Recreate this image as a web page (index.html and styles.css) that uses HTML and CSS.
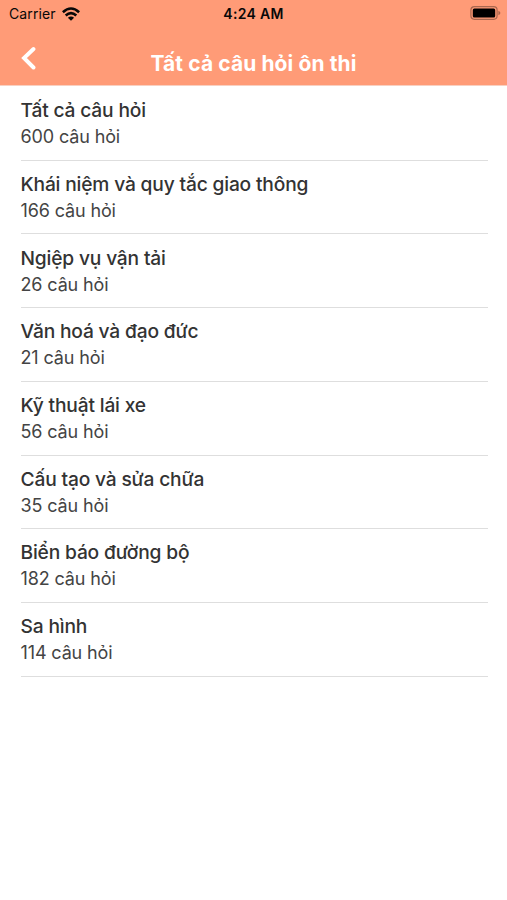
FILE: index.html
```html
<!DOCTYPE html>
<html lang="vi">
<head>
<meta charset="utf-8">
<title>Tất cả câu hỏi ôn thi</title>
<link rel="stylesheet" href="styles.css">
</head>
<body>
<header class="header">
  <div class="status">
    <div class="carrier"><span class="carrier-name">Carrier</span>
      <svg class="wifi" viewBox="0 0 18 14" width="18" height="14"><g fill="none" stroke="#080808" stroke-width="2.6"><path d="M.9 5.200Q9 -2.200 17.100 5.200"/><path d="M3.700 8.500Q9 3.800 14.300 8.500"/></g><path d="M9 13.800L5.900 10.700Q9 8.200 12.100 10.700Z" fill="#080808"/></svg>
    </div>
    <div class="time"><span class="time-text">4:24 AM</span></div>
    <svg class="battery" viewBox="0 0 31 14" width="31" height="14"><rect x=".9" y=".7" width="26.200" height="12.600" rx="3.500" fill="none" stroke="#a9674f" stroke-width="1.200"/><rect x="2.800" y="2.600" width="22.400" height="8.800" rx="1.500" fill="#000"/><path d="M28.400 4.700q2 .7 2 2.300t-2 2.300z" fill="#a9674f"/></svg>
  </div>
  <div class="nav">
    <svg class="back" viewBox="0 0 16 24" width="16" height="24"><path d="M13.500 3L4 12L13.500 21.500" fill="none" stroke="#fff" stroke-width="3.900" stroke-linecap="round"/></svg>
    <h1 class="title"><span class="title-text">Tất cả câu hỏi ôn thi</span></h1>
  </div>
</header>
<main class="list">
  <section class="item"><h2>Tất cả câu hỏi</h2><p>600 câu hỏi</p></section>
  <section class="item"><h2>Khái niệm và quy tắc giao thông</h2><p>166 câu hỏi</p></section>
  <section class="item"><h2>Ngiệp vụ vận tải</h2><p>26 câu hỏi</p></section>
  <section class="item"><h2>Văn hoá và đạo đức</h2><p>21 câu hỏi</p></section>
  <section class="item"><h2>Kỹ thuật lái xe</h2><p>56 câu hỏi</p></section>
  <section class="item"><h2>Cấu tạo và sửa chữa</h2><p>35 câu hỏi</p></section>
  <section class="item"><h2>Biển báo đường bộ</h2><p>182 câu hỏi</p></section>
  <section class="item"><h2>Sa hình</h2><p>114 câu hỏi</p></section>
</main>
</body>
</html>
```
FILE: styles.css
```css
* { box-sizing: border-box; }
body { margin: 0; background: #fff; color: #333; font-family: Inter, sans-serif; }
h1, h2, p { margin: 0; }
svg { display: block; }
.header { height: 86px; background: #ff9b77; border-bottom: 1px solid #f8d0c1; }
.status { height: 28px; display: grid; grid-template-columns: 1fr auto 1fr; align-items: center; padding: 0 6px; color: #080808; font-size: 14px; line-height: 28px; }
.carrier { display: flex; align-items: center; gap: 6px; padding-left: 3px; }
.carrier-name { letter-spacing: .1px; }
.wifi { margin-top: -1px; }
.battery { margin-top: -2px; justify-self: end; }
.time { font-weight: 600; letter-spacing: .3px; }
.nav { height: 57px; display: grid; grid-template-columns: 40px 1fr 40px; align-items: center; padding: 0 20px; }
.back { margin-top: 3px; }
.title { color: #fff; text-align: center; font-size: 21px; line-height: 28px; font-weight: 700; margin-top: 14px; letter-spacing: .1px; }
.list { padding: 1.1px 19px 0 20.5px; }
.item { height: 73.7px; padding-top: 10.2px; border-bottom: 1px solid #dedede; }
.item h2 { font-size: 19.2px; line-height: 27px; font-weight: 500; letter-spacing: -.17px; }
.item p { font-size: 18px; line-height: 26px; letter-spacing: -.13px; color: #444; }
```
